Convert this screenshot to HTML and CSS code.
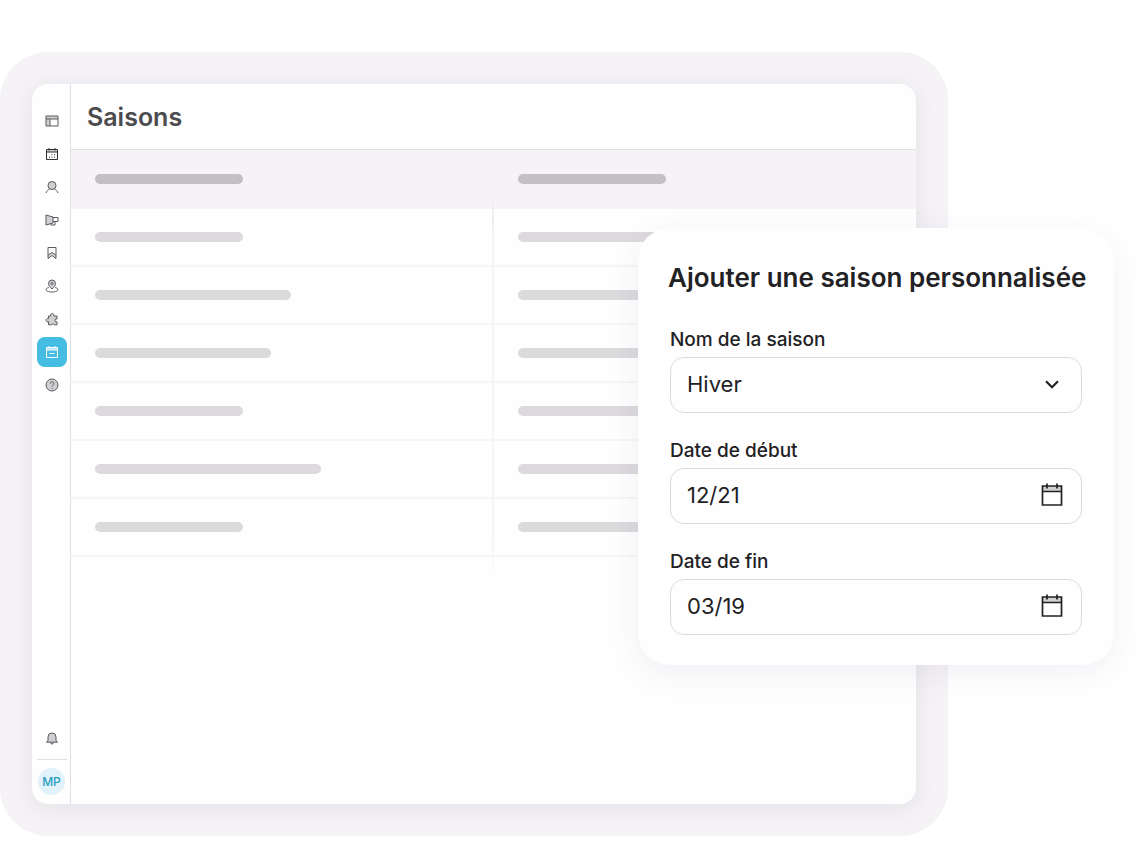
FILE: index.html
```
<!DOCTYPE html>
<html lang="fr">

<head>
   <meta charset="UTF-8">
   <meta name="viewport" content="width=device-width, initial-scale=1.0">
   <title>Saisons</title>
   <link rel="stylesheet" href="styles.css">
</head>

<body>
   <div class="device">
      <div class="app">
         <nav class="sidebar" aria-label="Navigation">
            <a href="#" class="navlink" aria-label="Tableau de bord">
               <svg class="icon" viewBox="0 0 14 14"><path class="fill" d="M1 2h12v3H5v7H1z"/><path d="M1 2h12v10H1zM1 5h12M5 5v7"/></svg>
            </a>
            <a href="#" class="navlink dark" aria-label="Calendrier">
               <svg class="icon" viewBox="0 0 14 14"><path class="fill" d="M1.500 2.500h11v2.500h-11z"/><path d="M1.500 2.500h11v10h-11zM1.500 5h11M4 1v2.500M10 1v2.500"/><path d="M4 10.200h1M6.500 10.200h1M9 10.200h1M6.500 7.700h1M9 7.700h1"/></svg>
            </a>
            <a href="#" class="navlink" aria-label="Clients">
               <svg class="icon" viewBox="0 0 14 14"><circle class="fill" cx="7" cy="5.500" r="4"/><circle cx="7" cy="5.500" r="4"/><path d="M1 13c.7-2 2-3.200 3.700-4M13 13c-.7-2-2-3.200-3.700-4"/></svg>
            </a>
            <a href="#" class="navlink" aria-label="Marketing">
               <svg class="icon" viewBox="0 0 14 14"><path class="fill" d="M1 2l7 2v6l-7 2z"/><path d="M1 2l7 2v6l-7 2zM8 4.500h5v4H8M6 10.500v1.500h4V8.500"/></svg>
            </a>
            <a href="#" class="navlink" aria-label="Favoris">
               <svg class="icon" viewBox="0 0 14 14"><path class="fill" d="M3 9l4-2.500L11 9v3.500L7 9.500l-4 3z"/><path d="M3 1.500h8v11L7 9.500l-4 3zM3 9l4-2.500L11 9"/></svg>
            </a>
            <a href="#" class="navlink" aria-label="Lieux">
               <svg class="icon" viewBox="0 0 14 14"><path class="fill" d="M7 10C5 8 3.500 6.500 3.500 4.500a3.500 3.500 0 017 0C10.500 6.500 9 8 7 10z"/><path d="M7 10C5 8 3.500 6.500 3.500 4.500a3.500 3.500 0 017 0C10.500 6.500 9 8 7 10z"/><circle cx="7" cy="4.500" r="1"/><path d="M3.800 8.500C2 9 1 9.700 1 10.500 1 12 3.700 13 7 13s6-1 6-2.500c0-.8-1-1.500-2.800-2"/></svg>
            </a>
            <a href="#" class="navlink" aria-label="Extensions">
               <svg class="icon" viewBox="0 0 14 14"><path class="fill" d="M3.500 4h2.200a1.700 1.700 0 113 0H12v3a1.500 1.500 0 100 2.800v3H9.300a1.500 1.500 0 00-2.800 0h-3V9.700a1.700 1.700 0 110-3z"/><path d="M3.500 4h2.200a1.700 1.700 0 113 0H12v3a1.500 1.500 0 100 2.800v3H9.300a1.500 1.500 0 00-2.800 0h-3V9.700a1.700 1.700 0 110-3z"/></svg>
            </a>
            <a href="#" class="navlink active" aria-label="Saisons" aria-current="page">
               <svg class="icon" viewBox="0 0 14 14"><path class="fill" d="M1.500 2.500h11v2.500h-11z"/><path d="M1.500 2.500h11v10h-11zM1.500 5h11M4 1v2.500M10 1v2.500M4.500 8.500h5"/></svg>
            </a>
            <a href="#" class="navlink" aria-label="Aide">
               <svg class="icon" viewBox="0 0 14 14"><circle class="fill" cx="7" cy="7" r="6"/><circle cx="7" cy="7" r="6"/><path d="M5.200 5.600a1.800 1.800 0 113 1.300C7.400 7.400 7 7.600 7 8.500M7 9.800v1"/></svg>
            </a>
            <div class="account">
               <button type="button" class="navlink" aria-label="Notifications">
                  <svg class="icon" viewBox="0 0 14 14"><path class="fill" d="M3 10V6a4 4 0 018 0v4l1.500 1.200h-11z"/><path d="M3 10V6a4 4 0 018 0v4l1.500 1.200h-11zM5.500 11.500c0 2 3 2 3 0"/></svg>
               </button>
               <hr class="separator">
               <button type="button" class="avatar">MP</button>
            </div>
         </nav>

         <main class="main">
            <header class="topbar">
               <h1>Saisons</h1>
            </header>
            <div class="list">
               <table class="seasons">
                  <thead>
                     <tr><th><div class="bar"></div></th><th><div class="bar"></div></th></tr>
                  </thead>
                  <tbody>
                     <tr><td><div class="bar"></div></td><td><div class="bar"></div></td></tr>
                     <tr><td><div class="bar large"></div></td><td><div class="bar"></div></td></tr>
                     <tr><td><div class="bar medium"></div></td><td><div class="bar"></div></td></tr>
                     <tr><td><div class="bar"></div></td><td><div class="bar"></div></td></tr>
                     <tr><td><div class="bar xlarge"></div></td><td><div class="bar"></div></td></tr>
                     <tr><td><div class="bar"></div></td><td><div class="bar"></div></td></tr>
                  </tbody>
               </table>
            </div>
         </main>
      </div>
   </div>

   <form class="modal" action="" method="get">
      <h2>Ajouter une saison personnalisée</h2>
      <div class="field">
         <label for="nom">Nom de la saison</label>
         <div class="control">
            <select id="nom" name="nom">
               <option>Hiver</option>
            </select>
            <svg class="chevron" viewBox="0 0 24 24"><path d="M6.500 9.500l5.500 5.500 5.500-5.500"/></svg>
         </div>
      </div>
      <div class="field">
         <label for="debut">Date de début</label>
         <div class="control">
            <input type="text" id="debut" name="debut" value="12/21">
            <button type="button" class="picker" aria-label="Choisir la date de début">
               <svg viewBox="0 0 26 26"><path class="fill" d="M3.500 4h19v5.500h-19z"/><path d="M3.500 4h19v19h-19zM3.500 9.500h19M8 1.500v5M18 1.500v5"/></svg>
            </button>
         </div>
      </div>
      <div class="field">
         <label for="fin">Date de fin</label>
         <div class="control">
            <input type="text" id="fin" name="fin" value="03/19">
            <button type="button" class="picker" aria-label="Choisir la date de fin">
               <svg viewBox="0 0 26 26"><path class="fill" d="M3.500 4h19v5.500h-19z"/><path d="M3.500 4h19v19h-19zM3.500 9.500h19M8 1.500v5M18 1.500v5"/></svg>
            </button>
         </div>
      </div>
   </form>
</body>

</html>
```
FILE: styles.css
```
/** Commun */
* {
   padding: 0;
   margin: 0;
   box-sizing: border-box;
   font-family: Inter, "Liberation Sans", sans-serif;
}
body {
   display: flex;
   min-height: 100vh;
   padding: 52px 198px 8px 0;
   position: relative;
   background-color: #fff;
   color: #222124;
}
button {
   border: none;
   background: none;
   cursor: pointer;
}
svg {
   display: block;
   fill: none;
   stroke: currentColor;
}
svg .fill {
   fill: #d0cfd2;
   stroke: none;
}

/** Cadre */
.device {
   flex: 1;
   display: flex;
   padding: 32px;
   border-radius: 48px;
   background-color: #f5f3f6;
}
.app {
   flex: 1;
   display: flex;
   border-radius: 16px;
   background-color: #fefefe;
   box-shadow: 0 4px 24px rgba(40,30,50,0.08);
}

/** Menu */
.sidebar {
   display: flex;
   flex-direction: column;
   align-items: center;
   gap: 3px;
   width: 39px;
   padding: 22px 0 9px 1px;
   border-right: 1px solid #e1e0e3;
}
.navlink {
   display: flex;
   align-items: center;
   justify-content: center;
   width: 30px;
   height: 30px;
   border-radius: 8px;
   color: #5b5a5e;
}
.navlink.dark {
   color: #333236;
}
.navlink.active {
   background-color: #45bce1;
   color: #fff;
}
.active .fill {
   fill: #a5dff1;
}
.icon {
   width: 14px;
   height: 14px;
}
.account {
   display: flex;
   flex-direction: column;
   align-items: center;
   margin-top: auto;
}
.separator {
   width: 30px;
   margin: 6px 0 8px;
   border: none;
   border-top: 1px solid #e1e0e3;
}
.avatar {
   width: 27px;
   height: 27px;
   border-radius: 50%;
   background-color: #e1f2fa;
   color: #2a9cc0;
   font-size: 12px;
   font-weight: 500;
}

/** Contenu */
.main {
   flex: 1;
}
.topbar {
   display: flex;
   align-items: center;
   height: 66px;
   padding: 0 16px;
   border-bottom: 1px solid #e1e0e3;
}
h1 {
   font-size: 25px;
   font-weight: 600;
   color: #4c4b4e;
}
.list {
   position: relative;
}
.list::after {
   content: "";
   position: absolute;
   top: 43px;
   bottom: -20px;
   left: 50%;
   width: 2px;
   margin-left: -2px;
   background: linear-gradient(rgba(236,234,238,0), #eeecf0 6%, #f5f4f7 12%, #f5f4f7 90%, rgba(245,244,247,0));
}
.seasons {
   width: 100%;
   table-layout: fixed;
   border-spacing: 0;
}
.seasons th, .seasons td {
   height: 58px;
   padding: 0 24px;
   border-bottom: 2px solid #f6f5f7;
}
.seasons th {
   height: 59px;
   border-bottom-color: #f5f3f6;
   background-color: #f5f3f6;
}
.bar {
   width: 148px;
   height: 10px;
   border-radius: 5px;
   background-color: #dcdadd;
}
th .bar {
   background-color: #c2c0c3;
}
.bar.medium { width: 176px;}
.bar.large { width: 196px;}
.bar.xlarge { width: 226px;}

/** Formulaire */
.modal {
   position: absolute;
   top: 228px;
   right: 32px;
   display: flex;
   flex-direction: column;
   gap: 25px;
   width: 476px;
   padding: 32px 30px 30px;
   border-radius: 32px;
   background-color: #fefefe;
   box-shadow: 0 8px 32px rgba(50,40,110,0.07);
}
h2 {
   margin-bottom: 6px;
   font-size: 26px;
   font-weight: 600;
   line-height: 36px;
   white-space: nowrap;
}
.field {
   display: flex;
   flex-direction: column;
   gap: 5px;
   padding: 0 2px;
}
label {
   font-size: 19px;
   font-weight: 500;
   line-height: 25px;
}
.control {
   display: flex;
   align-items: center;
   height: 56px;
   padding: 0 16px 2px;
   border: 1px solid #dcdadd;
   border-radius: 14px;
}
.control input, .control select {
   flex: 1;
   min-width: 0;
   border: none;
   outline: none;
   appearance: none;
   background: none;
   color: #222124;
   font-size: 22px;
}
.chevron {
   width: 26px;
   height: 26px;
   stroke-width: 2;
   pointer-events: none;
}
.picker {
   color: #222124;
}
.picker svg {
   width: 26px;
   height: 26px;
   stroke-width: 1.7;
}
```
